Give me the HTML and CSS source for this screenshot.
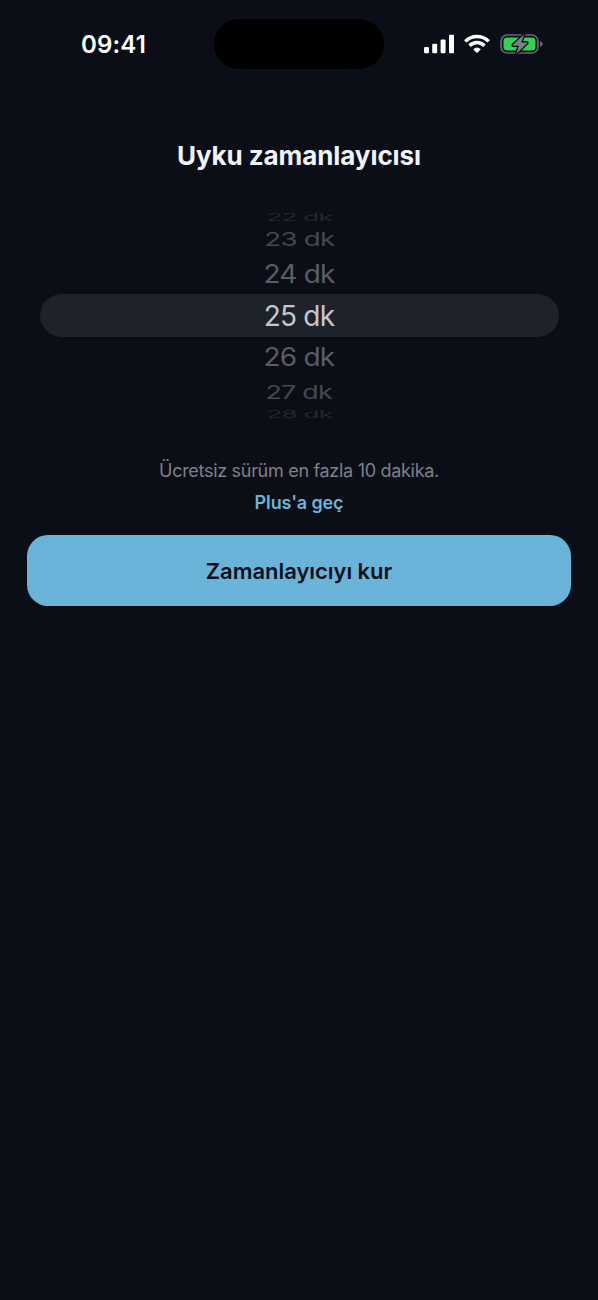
FILE: index.html
```html
<!DOCTYPE html>
<html lang="tr">
<head>
<meta charset="utf-8">
<title>Uyku zamanlayıcısı</title>
<link rel="stylesheet" href="styles.css">
</head>
<body>
<header class="status">
  <div class="status-side"><span class="time">09:41</span></div>
  <div class="island"></div>
  <div class="status-side status-icons">
    <svg class="signal" width="30" height="20" viewBox="0 0 30 20" fill="#fff">
      <rect x="0" y="13" width="5" height="6.2" rx="1.3"/>
      <rect x="8.2" y="9.8" width="5" height="9.4" rx="1.3"/>
      <rect x="16.6" y="5.5" width="5" height="13.7" rx="1.3"/>
      <rect x="25" y="0.8" width="5" height="18.4" rx="1.3"/>
    </svg>
    <svg class="wifi" width="26" height="20" viewBox="0 0 26 20">
      <g fill="none" stroke="#fff" stroke-width="3.5">
        <path d="M1.3 7.4Q6.2 2.4 13 2.4T24.7 7.4"/>
        <path d="M5.6 11.8Q8.7 8.6 13 8.6T20.4 11.8"/>
      </g>
      <path fill="#fff" d="M9.2 15.2Q13 12 16.8 15.2L13.7 18.5Q13 19.1 12.3 18.5Z"/>
    </svg>
    <svg class="battery" width="43" height="22" viewBox="0 0 43 22">
      <rect x="1.1" y="2" width="36.8" height="18" rx="6" fill="none" stroke="#66696f" stroke-width="1.7"/>
      <path fill="#66696f" d="M40 8.2Q42.7 9 42.7 11T40 13.8Z"/>
      <rect x="3.5" y="4.4" width="32" height="13.2" rx="3.8" fill="#34d158"/>
      <path d="M24.2 1.2L12.9 11.8Q12.4 12.7 13.4 12.7H18.9L16.1 20.9L27.2 10.3Q27.7 9.4 26.7 9.4H21.3Z" fill="#7b7f86" stroke="#0b0e16" stroke-width="2.6" paint-order="stroke" stroke-linejoin="round"/>
    </svg>
  </div>
</header>
<main class="sheet">
  <h1 class="title">Uyku zamanlayıcısı</h1>
  <div class="picker">
    <div class="row edge"><span>22 dk</span></div>
    <div class="row far"><span>23 dk</span></div>
    <div class="row near"><span>24 dk</span></div>
    <div class="row selected"><span>25 dk</span></div>
    <div class="row near"><span>26 dk</span></div>
    <div class="row far below"><span>27 dk</span></div>
    <div class="row edge below"><span>28 dk</span></div>
  </div>
  <p class="note">Ücretsiz sürüm en fazla 10 dakika.</p>
  <a class="plus">Plus'a geç</a>
  <button class="cta"><span>Zamanlayıcıyı kur</span></button>
</main>
</body>
</html>
```
FILE: styles.css
```css
* { box-sizing: border-box; }
body {
  margin: 0;
  min-height: 1300px;
  background: #0b0e16;
  font-family: Inter, "Liberation Sans", sans-serif;
  color: #eff3fb;
}
.status { display: flex; height: 88px; align-items: center; }
.status-side { flex: none; width: 214px; display: flex; align-items: center; }
.time { margin: 2px 0 0 81px; font-size: 24px; font-weight: 600; line-height: 30px; color: #fff; letter-spacing: 0.15px; white-space: nowrap; }
.island { width: 170px; height: 50px; border-radius: 25px; background: #000; }
.status-icons { padding-left: 40px; }
.wifi { margin-left: 10px; }
.battery { margin-left: 10px; }
.sheet { display: flex; flex-direction: column; align-items: center; padding: 0 27px; }
.title { margin: 52px 0 0; font-size: 26px; line-height: 32px; font-weight: 700; letter-spacing: -0.08px; white-space: nowrap; }
.picker { width: 519px; margin-top: 37px; }
.row { display: flex; align-items: center; justify-content: center; font-size: 28px; line-height: 34px; }
.row span { display: block; white-space: nowrap; letter-spacing: -0.8px; }
.selected { height: 43px; border-radius: 21.5px; background: #1e222a; color: #c5c7cc; }
.near { height: 40px; color: #5a5d63; }
.near span { transform: scaleY(0.91); }
.far { height: 29px; color: #45484e; }
.far span { transform: translateY(-1px) scale(0.99, 0.68); }
.far.below span { transform: scale(0.96, 0.68); }
.edge { height: 16px; color: #24272e; }
.edge span { transform: scale(0.93, 0.38); }
.note { margin: 38px 0 0; font-size: 18px; line-height: 22px; letter-spacing: -0.3px; color: #7d8089; white-space: nowrap; }
.plus { margin-top: 10px; font-size: 18px; line-height: 22px; font-weight: 600; letter-spacing: -0.15px; color: #6bb4d9; white-space: nowrap; }
.cta { width: 544px; height: 71px; margin-top: 21px; padding: 0; border: 0; border-radius: 21px; background: #6bb4d9; color: #07101a; font-family: inherit; font-size: 22px; font-weight: 600; letter-spacing: -0.04px; }
```
